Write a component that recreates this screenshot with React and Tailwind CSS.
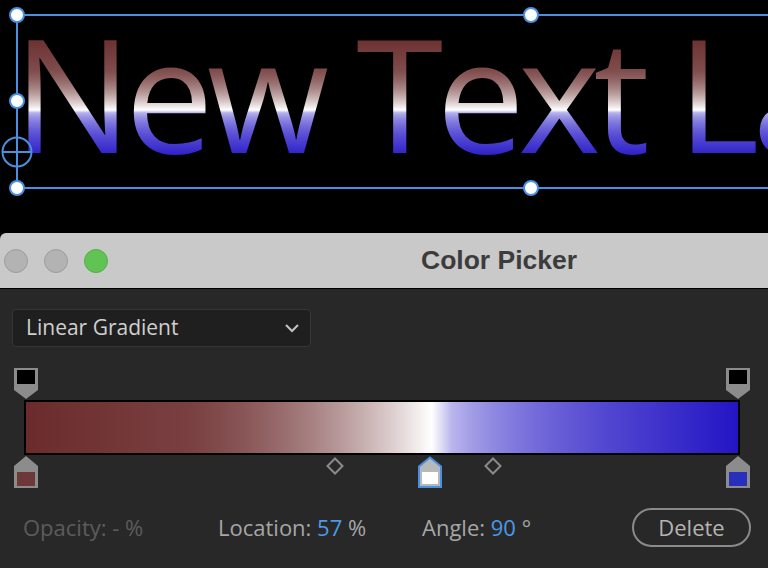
import React from "react";

function TopStop({ left }) {
  return (
    <svg className="absolute top-0" style={{ left: left - 12 }} width="24" height="31" viewBox="0 0 24 31">
      <polygon points="0,0 24,0 24,22 12,31 0,22" fill="#8c8c8c" />
      <rect x="3" y="2" width="18" height="14" fill="#000" />
    </svg>
  );
}

function BottomStop({ left, color, selected }) {
  return (
    <svg className="absolute top-[88px]" style={{ left: left - 12 }} width="24" height="32" viewBox="0 0 24 32">
      {selected ? (
        <polygon points="12,1.5 23,10.5 23,31 1,31 1,10.5" fill="#b8b8b8" stroke="#4a90e2" strokeWidth="2" />
      ) : (
        <polygon points="12,0 24,10 24,32 0,32 0,10" fill="#8c8c8c" />
      )}
      <rect x={selected ? 4 : 3} y="16" width={selected ? 16 : 18} height={selected ? 12 : 14} fill={color} />
    </svg>
  );
}

function Diamond({ left }) {
  return (
    <svg className="absolute top-[89px]" style={{ left: left - 9 }} width="18" height="18" viewBox="0 0 18 18">
      <polygon points="9,1.5 16.5,9 9,16.5 1.5,9" fill="none" stroke="#8a8a8a" strokeWidth="2" />
    </svg>
  );
}

function Handle({ x, y }) {
  return (
    <div
      className="absolute w-[16px] h-[16px] rounded-full bg-white border-2 border-[#4a8fe0]"
      style={{ left: x - 8, top: y - 8 }}
    />
  );
}

export default function App() {
  return (
    <div className="w-[768px] h-[568px] overflow-hidden bg-black flex flex-col" style={{ fontFamily: '"Open Sans", "Noto Sans", sans-serif' }}>
      {/* canvas */}
      <div className="relative h-[233px] shrink-0 bg-black overflow-hidden">
        <div
          className="absolute left-[13px] top-[13px] whitespace-nowrap text-[158px] leading-none text-transparent bg-clip-text bg-[linear-gradient(to_bottom,#6e3434_30px,80px,#ffffff_97px,105px,#2a1cc8_144px)]"
          style={{ fontFamily: '"Open Sans", sans-serif', letterSpacing: "-7px" }}
        >
          New Text La
        </div>
        {/* selection */}
        <div className="absolute left-[16px] top-[14px] w-[800px] h-[175px] border-2 border-[#4a8fe0]" />
        <Handle x={17} y={15} />
        <Handle x={531} y={15} />
        <Handle x={17} y={101} />
        <Handle x={17} y={188} />
        <Handle x={531} y={188} />
        <svg className="absolute left-[1px] top-[136px]" width="32" height="32" viewBox="0 0 32 32">
          <circle cx="16" cy="16" r="14.5" fill="none" stroke="#4a8fe0" strokeWidth="2" />
          <line x1="1" y1="16" x2="31" y2="16" stroke="#4a8fe0" strokeWidth="2" />
          <line x1="16" y1="1" x2="16" y2="31" stroke="#4a8fe0" strokeWidth="2" />
        </svg>
      </div>

      {/* window title bar */}
      <div className="h-[56px] shrink-0 bg-[#c9c9c9] border-b border-black flex items-center rounded-tl-[6px]">
        <div className="flex items-center gap-[16px] pl-[4px]">
          <div className="w-[24px] h-[24px] rounded-full bg-[#b3b3b3] border border-[#9c9c9c]" />
          <div className="w-[24px] h-[24px] rounded-full bg-[#b3b3b3] border border-[#9c9c9c]" />
          <div className="w-[24px] h-[24px] rounded-full bg-[#62c355] border border-[#54ad48]" />
        </div>
        <div
          className="ml-[313px] text-[26.5px] font-bold text-[#3c3c3c] leading-none pb-[1px]"
          style={{ fontFamily: '"Liberation Sans", Arial, sans-serif' }}
        >
          Color Picker
        </div>
      </div>

      {/* window body */}
      <div className="flex-1 bg-[#282828] pt-[20px] flex flex-col">
        {/* dropdown */}
        <div className="ml-[12px] w-[299px] h-[38px] rounded-[4px] bg-[#1f1f1f] border border-[#363636] flex items-center justify-between pl-[13px] pr-[10px]">
          <span className="text-[21px] text-[#d0d0d0] leading-none pb-[2px]">Linear Gradient</span>
          <svg width="16" height="10" viewBox="0 0 16 10">
            <polyline points="2,2 8,8 14,2" fill="none" stroke="#c4c4c4" strokeWidth="2" />
          </svg>
        </div>

        {/* gradient slider */}
        <div className="relative mt-[21px] h-[120px] pt-[32px] px-[24px]">
          <div className="w-[716px] h-[55px] border-2 border-black bg-[linear-gradient(to_right,#6b2b2c_0%,43.5%,#ffffff_57%,65.4%,#2315c4_100%)]" />
          <TopStop left={26} />
          <TopStop left={738} />
          <BottomStop left={26} color="#6c3838" />
          <BottomStop left={430} color="#ffffff" selected />
          <BottomStop left={738} color="#2830bb" />
          <Diamond left={335} />
          <Diamond left={493} />
        </div>

        {/* bottom row */}
        <div className="mt-[20px] h-[39px] flex items-center text-[22px] leading-none">
          <div className="w-[218px] pl-[23px] text-[#5c5c5c] pb-[2px]">Opacity: - %</div>
          <div className="w-[204px] text-[#a6a6a6] pb-[2px]">
            Location: <span className="text-[#4a9ae8]">57</span> %
          </div>
          <div className="w-[210px] text-[#a6a6a6] pb-[2px]">
            Angle: <span className="text-[#4a9ae8]">90</span> °
          </div>
          <button className="w-[119px] h-[39px] rounded-full border-2 border-[#8a8a8a] text-[#b4b4b4] text-[22px] flex items-center justify-center pb-[2px]">
            Delete
          </button>
        </div>
      </div>
    </div>
  );
}
